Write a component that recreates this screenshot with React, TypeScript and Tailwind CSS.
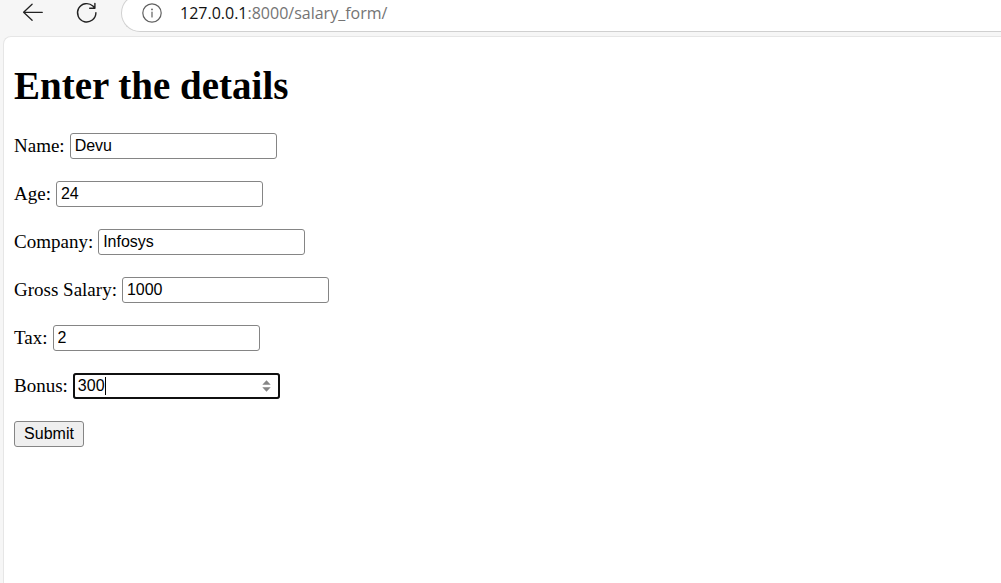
import { useState } from "react";

const FIELD =
  "block h-[26px] w-[207px] rounded-[3px] border border-[#858585] bg-white px-1 font-['Liberation_Sans',Arial,sans-serif] text-base leading-5 text-black [appearance:textfield] [&::-webkit-inner-spin-button]:appearance-none";

const FIELDS = [
  { id: "name", label: "Name:", type: "text", value: "Devu" },
  { id: "age", label: "Age:", type: "number", value: "24" },
  { id: "company", label: "Company:", type: "text", value: "Infosys" },
  { id: "gross_salary", label: "Gross Salary:", type: "number", value: "1000" },
  { id: "tax", label: "Tax:", type: "number", value: "2" },
];

function Toolbar() {
  return (
    <header className="flex h-8 items-end overflow-hidden pl-[21px]">
      <div className="flex h-[38px] shrink-0 items-center gap-[30px] pr-[22px]">
        <button type="button" aria-label="Back" className="h-6 w-6">
          <svg viewBox="0 0 24 24" className="h-6 w-6" fill="none" stroke="#222" strokeWidth="1.3" strokeLinecap="round" strokeLinejoin="round">
            <path d="M21.3 11.3H2.6M11.1 3.2 2.6 11.3l8.5 8" />
          </svg>
        </button>
        <button type="button" aria-label="Refresh" className="h-6 w-6">
          <svg viewBox="0 0 24 24" className="h-6 w-6" fill="none" stroke="#222" strokeWidth="1.4" strokeLinecap="round" strokeLinejoin="round">
            <path d="M20.9 11.8A9.2 9.2 0 1 1 17.9 5L19.9 7.1M19.9 2.4v4.8h-5.2" />
          </svg>
        </button>
      </div>
      <div className="flex h-[38px] grow items-center rounded-l-full border border-r-0 border-[#d0d0d0] bg-white pl-5">
        <button type="button" aria-label="View site information" className="h-5 w-5 shrink-0">
          <svg viewBox="0 0 20 20" className="h-5 w-5" fill="none" stroke="#606060" strokeWidth="1.2" strokeLinecap="round">
            <circle cx="10" cy="10" r="9.2" />
            <path d="M10 9v5" />
            <circle cx="10" cy="6.4" r="0.9" fill="#606060" stroke="none" />
          </svg>
        </button>
        <a href="#" className="ml-[18px] font-['Open_Sans','Noto_Sans',sans-serif] text-base text-[#747474]">
          <span className="text-[#111]">127.0.0.1</span>:8000/salary_form/
        </a>
      </div>
    </header>
  );
}

function BonusField() {
  const [bonus, setBonus] = useState(300);
  return (
    <div className="flex items-center gap-[5px]">
      <label htmlFor="bonus">Bonus:</label>
      <div className="relative">
        <input
          id="bonus"
          name="bonus"
          type="number"
          value={bonus}
          onChange={(e) => setBonus(Number(e.target.value))}
          className={`${FIELD} caret-transparent outline-2 -outline-offset-2 outline-[#101010]`}
        />
        <span className="pointer-events-none absolute top-1 left-1 flex h-[18px] pl-px font-['Liberation_Sans',Arial,sans-serif] text-base" aria-hidden="true">
          <span className="invisible">{bonus}</span>
          <span className="w-px bg-black" />
        </span>
        <div className="absolute top-[7px] right-[9px] flex flex-col gap-[2px]">
          <button type="button" aria-label="Increase bonus" onClick={() => setBonus(bonus + 1)} className="h-[5px] w-[9px]">
            <svg viewBox="0 0 9 5" className="block h-[5px] w-[9px]" fill="#858585">
              <path d="M4.5 0.3 8.7 4.7H0.3z" />
            </svg>
          </button>
          <button type="button" aria-label="Decrease bonus" onClick={() => setBonus(bonus - 1)} className="h-[5px] w-[9px]">
            <svg viewBox="0 0 9 5" className="block h-[5px] w-[9px]" fill="#858585">
              <path d="M4.5 4.7 0.3 0.3h8.4z" />
            </svg>
          </button>
        </div>
      </div>
    </div>
  );
}

export default function App() {
  return (
    <div className="flex min-h-screen flex-col bg-[#f6f6f6]">
      <Toolbar />
      <main className="mt-1 ml-[3px] grow rounded-tl-lg border-t border-l border-[#e6e6e6] bg-white pt-6 pl-[10px] font-['Liberation_Serif','Times_New_Roman',serif] text-black">
        <h1 className="text-[39px] leading-[50px] font-bold">Enter the details</h1>
        <form className="mt-[22px] flex flex-col items-start gap-[22px] text-[19px] leading-[26px]" onSubmit={(e) => e.preventDefault()}>
          {FIELDS.map((f) => (
            <div key={f.id} className="flex items-center gap-[5px]">
              <label htmlFor={f.id}>{f.label}</label>
              <input id={f.id} name={f.id} type={f.type} defaultValue={f.value} className={FIELD} />
            </div>
          ))}
          <BonusField />
          <button type="submit" className="h-[26px] w-[70px] rounded-[3px] border border-[#858585] bg-[#efefef] font-['Liberation_Sans',Arial,sans-serif] text-base leading-5">
            Submit
          </button>
        </form>
      </main>
    </div>
  );
}
